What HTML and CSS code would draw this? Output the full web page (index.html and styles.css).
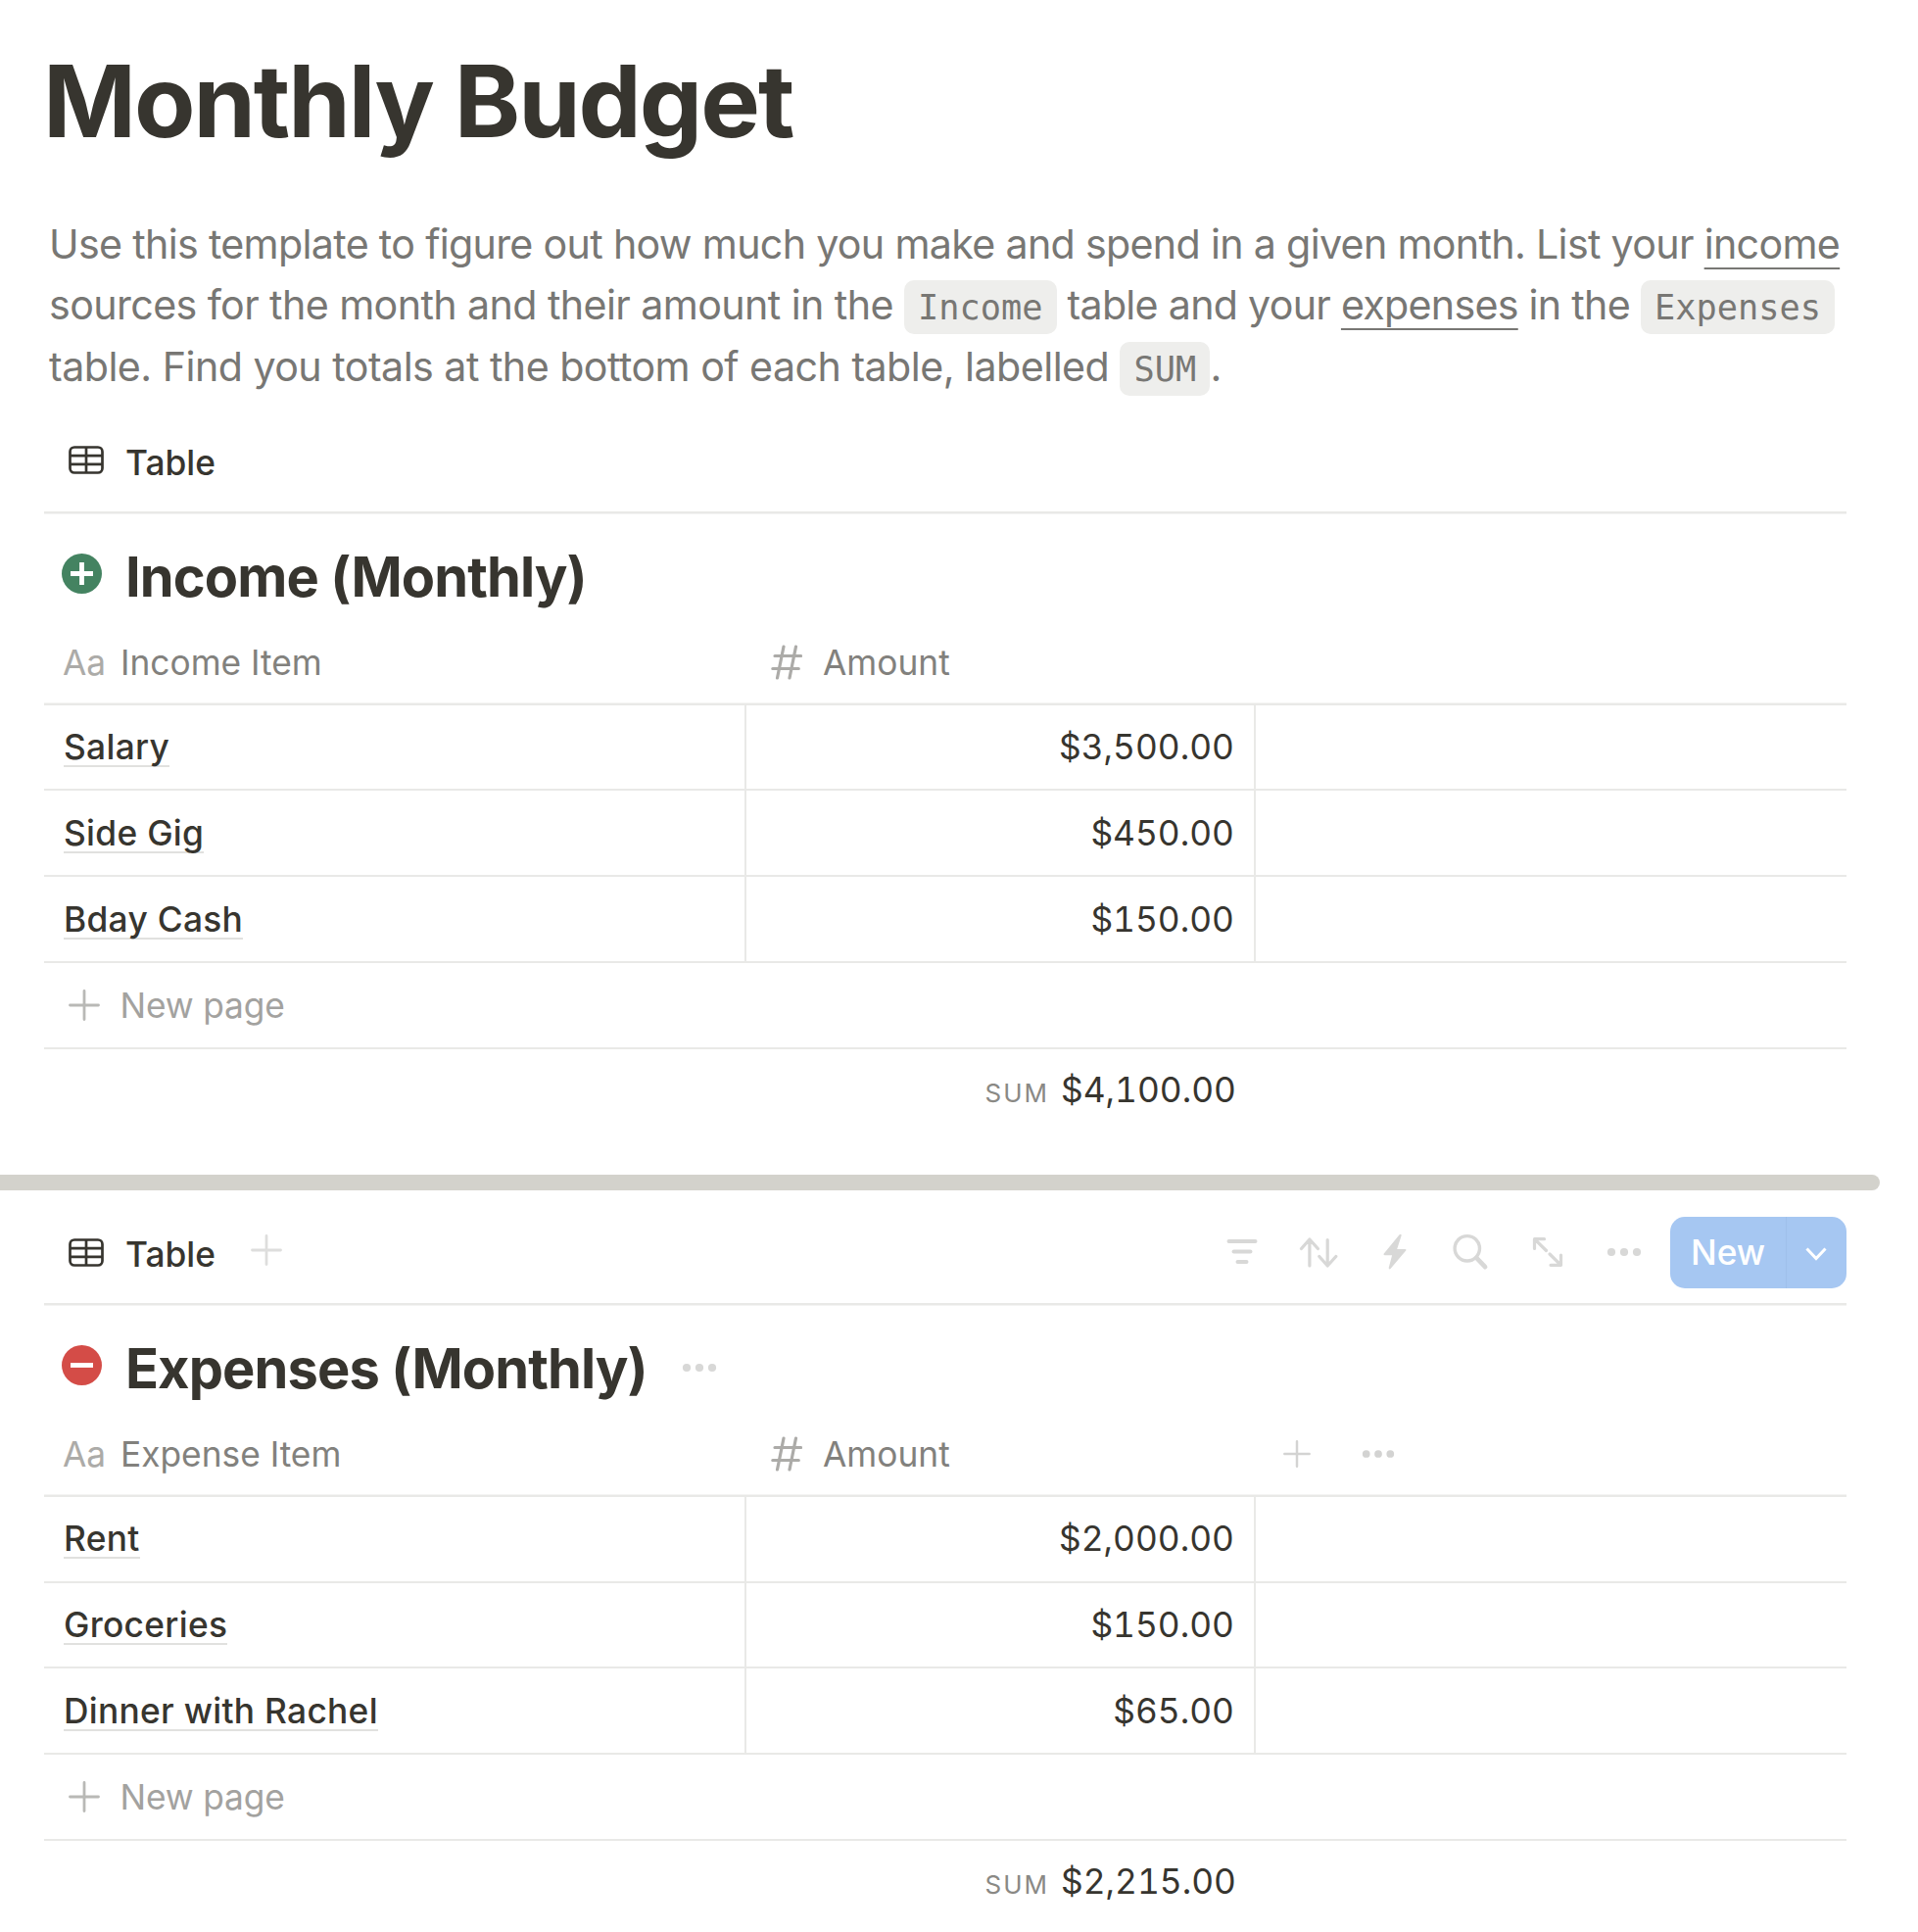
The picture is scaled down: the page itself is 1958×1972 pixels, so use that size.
FILE: index.html
```html
<!DOCTYPE html>
<html lang="en">
<head>
<meta charset="utf-8">
<title>Monthly Budget</title>
<link rel="stylesheet" href="styles.css">
</head>
<body>
<svg width="0" height="0" class="sprite">
  <symbol id="i-table" viewBox="0 0 36 29"><g fill="none" stroke="currentColor" stroke-width="2.700"><rect x="1.500" y="1.500" width="33" height="26" rx="4.500"/><path d="M1.500 10.200h33M1.500 18.800h33M18 1.500v26"/></g></symbol>
  <symbol id="i-plus" viewBox="0 0 32 32"><path d="M16 1.500v29M1.500 16h29" fill="none" stroke="currentColor" stroke-width="2.800" stroke-linecap="round"/></symbol>
  <symbol id="i-dots" viewBox="0 0 36 10"><g fill="currentColor"><circle cx="5" cy="5" r="4.100"/><circle cx="18" cy="5" r="4.100"/><circle cx="31" cy="5" r="4.100"/></g></symbol>
  <symbol id="i-hash" viewBox="0 0 32 36"><path d="M13 2L6.500 34M25.500 2L19 34M4 11.500h26.500M1.800 24.500h26.500" fill="none" stroke="currentColor" stroke-width="3.200" stroke-linecap="round"/></symbol>
</svg>
<main class="page">
  <h1 class="title">Monthly Budget</h1>
  <p class="intro"><span class="line-a">Use this template to figure out how much you make and spend in a given month. List your <a>income</a></span><br><span class="line-b">sources for the month and their amount in the </span><code>Income</code><span class="line-c"> table and your <a>expenses</a> in the </span><code>Expenses</code><br><span class="line-d">table. Find you totals at the bottom of each table, labelled </span><code>SUM</code>.</p>

  <section class="database income">
    <div class="tabbar">
      <svg class="tab-icon"><use href="#i-table"/></svg>
      <span class="tab-label">Table</span>
    </div>
    <div class="heading">
      <svg class="badge" viewBox="0 0 41 41"><circle cx="20.500" cy="20.500" r="20.500" fill="#448361"/><path d="M20.500 9v23M9 20.500h23" stroke="#fff" stroke-width="4.800"/></svg>
      <h2>Income (Monthly)</h2>
    </div>
    <div class="row head">
      <div class="cell"><span class="aa">Aa</span><span class="col">Income Item</span></div>
      <div class="cell num"><svg class="hash"><use href="#i-hash"/></svg><span class="col">Amount</span></div>
      <div class="cell"></div>
    </div>
    <div class="row"><div class="cell"><span class="name">Salary</span></div><div class="cell amount"><span>$3,500.00</span></div><div class="cell"></div></div>
    <div class="row"><div class="cell"><span class="name">Side Gig</span></div><div class="cell amount"><span>$450.00</span></div><div class="cell"></div></div>
    <div class="row"><div class="cell"><span class="name">Bday Cash</span></div><div class="cell amount"><span>$150.00</span></div><div class="cell"></div></div>
    <div class="row new"><svg class="plus"><use href="#i-plus"/></svg><span>New page</span></div>
    <div class="sum"><span class="sum-label">SUM</span><span class="sum-value">$4,100.00</span></div>
  </section>

  <div class="divider"></div>

  <section class="database expenses">
    <div class="tabbar">
      <svg class="tab-icon"><use href="#i-table"/></svg>
      <span class="tab-label">Table</span>
      <svg class="plus add-view"><use href="#i-plus"/></svg>
      <div class="tools">
        <svg class="tool" viewBox="0 0 40 40"><path d="M6.500 10h27M11.500 20.500h17M15.500 31h9" stroke-width="4"/></svg>
        <svg class="tool" viewBox="0 0 40 40"><path d="M10.900 35V8M2.500 17.500L10.900 8l8.500 9.500M29.200 8.500v26.500M20.800 25.500l8.400 9.500 8.600-9.500" stroke-width="3.200"/></svg>
        <svg class="tool" viewBox="0 0 40 40"><path class="solid" d="M24.600 3.300L8.800 22.500q-.8 1.600.8 1.800h7.500L13.700 37q0 2.200 1.800.9L31.200 19.600q.8-1.500-.8-1.700h-8.200L26.600 4.300q.2-2.400-2-1z"/></svg>
        <svg class="tool" viewBox="0 0 40 40"><circle cx="15.800" cy="17.300" r="12.700" stroke-width="3.400"/><path d="M25.500 27.200l8.600 9" stroke-width="4.600"/></svg>
        <svg class="tool" viewBox="0 0 40 40"><path d="M16.500 7.700H6.500V17.500M7 8.200l11.500 11.300M23 34.300h10.500V24M33 33.800L22 23" stroke-width="3.200"/></svg>
        <svg class="dots"><use href="#i-dots"/></svg>
        <div class="button"><span class="button-text">New</span><span class="button-more"><svg viewBox="0 0 22 14"><path d="M1.500 1.500L11 11.500l9.500-10" fill="none" stroke="#fff" stroke-width="3"/></svg></span></div>
      </div>
    </div>
    <div class="heading">
      <svg class="badge" viewBox="0 0 41 41"><circle cx="20.500" cy="20.500" r="20.500" fill="#d44c47"/><path d="M9 20.500h23" stroke="#fff" stroke-width="4.800"/></svg>
      <h2>Expenses (Monthly)</h2>
      <svg class="dots heading-dots"><use href="#i-dots"/></svg>
    </div>
    <div class="row head">
      <div class="cell"><span class="aa">Aa</span><span class="col">Expense Item</span></div>
      <div class="cell num"><svg class="hash"><use href="#i-hash"/></svg><span class="col">Amount</span></div>
      <div class="cell extra"><svg class="plus"><use href="#i-plus"/></svg><svg class="dots"><use href="#i-dots"/></svg></div>
    </div>
    <div class="row"><div class="cell"><span class="name">Rent</span></div><div class="cell amount"><span>$2,000.00</span></div><div class="cell"></div></div>
    <div class="row"><div class="cell"><span class="name">Groceries</span></div><div class="cell amount"><span>$150.00</span></div><div class="cell"></div></div>
    <div class="row"><div class="cell"><span class="name">Dinner with Rachel</span></div><div class="cell amount"><span>$65.00</span></div><div class="cell"></div></div>
    <div class="row new"><svg class="plus"><use href="#i-plus"/></svg><span>New page</span></div>
    <div class="sum"><span class="sum-label">SUM</span><span class="sum-value">$2,215.00</span></div>
  </section>
</main>
</body>
</html>
```
FILE: styles.css
```css
* { box-sizing: border-box; }

body {
  margin: 0;
  background: #fff;
  color: #37352f;
  font-family: Inter, "Liberation Sans", sans-serif;
  font-size: 35.300px;
}

.sprite { position: absolute; }
svg { display: block; flex: none; }

.page { padding-top: 42px; height: 1972px; overflow: hidden; }

.title {
  margin: 0 0 53.500px 44px;
  font-size: 102px;
  line-height: 122px;
  font-weight: 700;
  letter-spacing: -2.080px;
}

.intro {
  margin: 0 0 21px 50px;
  color: #787774;
  font-size: 41.200px;
  line-height: 62.500px;
  white-space: nowrap;
}
.line-a { letter-spacing: -0.690px; }
.line-b { letter-spacing: -0.600px; }
.line-c { letter-spacing: -0.730px; }
.line-d { letter-spacing: -0.540px; }

.intro a {
  text-decoration: underline;
  text-decoration-thickness: 2px;
  text-underline-offset: 9px;
  text-decoration-skip-ink: none;
}

.intro code {
  padding: 7px 14.200px;
  border-radius: 10px;
  background: #eeeeec;
  font-family: "DejaVu Sans Mono", monospace;
  font-size: 35.300px;
  line-height: 1;
}

.database { margin: 0 73px 0 45px; }

.tabbar {
  display: flex;
  align-items: center;
  height: 98px;
  padding: 0 0 7px 25px;
  border-bottom: 2px solid #e9e9e7;
  box-shadow: 0 1px #f4f4f3;
}
.tab-icon { width: 36px; height: 29px; margin: 0 22px 1px 0; }
.income .tab-icon { margin-bottom: 2px; }
.tab-label { padding-top: 3px; font-weight: 500; }

.heading {
  display: flex;
  align-items: center;
  height: 112px;
  padding: 17px 0 0 18px;
}
.badge { width: 41px; height: 41px; margin: 0 24px 6px 0; }
.heading h2 { margin: 0; font-size: 56px; line-height: 66px; font-weight: 700; letter-spacing: -0.900px; }

.row {
  display: grid;
  grid-template-columns: 717px 520px 1fr;
  height: 88px;
  border-bottom: 2px solid #e9e9e7;
}
.income .head + .row, .expenses .head + .row + .row { height: 87px; }
.expenses .head + .row .cell { padding-bottom: 2px; }
.cell {
  display: flex;
  align-items: center;
  padding-left: 20px;
  border-right: 2px solid #e9e9e7;
}
.cell:last-child { border-right: 0; }

.head { height: 84px; box-shadow: inset 0 -1px #f4f4f3; color: #82817d; }
.head .cell { border: 0; padding: 0 0 2px 19px; }
.aa { width: 59px; color: #acaba8; }
.head .num { padding-left: 25px; }
.hash { width: 32px; height: 36px; margin-right: 21px; color: #acaba8; }
.head .extra { gap: 52px; padding: 0 0 3px 28px; color: #d3d3d2; }
.extra .plus { width: 28px; height: 28px; }
.extra .dots { width: 34px; }

.name {
  font-weight: 500;
  line-height: 37px;
  letter-spacing: 0.300px;
  border-top: 2px solid transparent;
  border-bottom: 2px solid #e1e1df;
}
.amount { justify-content: flex-end; padding-right: 20px; }
.amount, .sum-value { font-variant-numeric: tabular-nums; }

.plus { width: 32px; height: 32px; }
.new { display: flex; align-items: center; padding-left: 25px; gap: 20.500px; color: #a3a29f; }
.new span { letter-spacing: -0.150px; }
.new .plus { color: #b9b9b6; }

.sum {
  display: flex;
  align-items: baseline;
  justify-content: flex-end;
  width: 1217px;
  height: 83px;
  line-height: 83px;
}
.sum-label { margin-right: 12px; color: #8a8985; font-size: 26px; letter-spacing: 2px; }

.divider {
  width: 1919px;
  height: 16px;
  margin: 45px 0 19px -45px;
  margin-left: 0;
  border-radius: 0 8px 8px 0;
  background: #d3d2cc;
}

.add-view { margin: 0 0 5px 36px; color: #dededd; }
.tools { display: flex; align-items: center; margin-left: auto; color: #d8d8d7; }
.tool { width: 40px; height: 40px; margin: 0 38px 3px 0; fill: none; stroke: currentColor; stroke-linecap: round; stroke-linejoin: round; }
.tool .solid { fill: currentColor; stroke: none; }
.tools .dots { margin: 0 0 2px 2px; }
.dots { width: 36px; height: 10px; }

.button {
  display: flex;
  align-items: center;
  width: 180px;
  height: 73px;
  margin-left: 29px;
  border-radius: 15px;
  background: #a6c7f2;
  color: #fff;
  font-weight: 500;
}
.button-text { width: 118px; padding-left: 21px; }
.button-more {
  display: flex;
  align-items: center;
  width: 62px;
  height: 73px;
  padding: 2px 0 0 19px;
  border-left: 1px solid #9fc0eb;
}
.button-more svg { width: 22px; height: 14px; }
.heading-dots { margin: 0 0 2px 35px; color: #d8d8d7; }
```
